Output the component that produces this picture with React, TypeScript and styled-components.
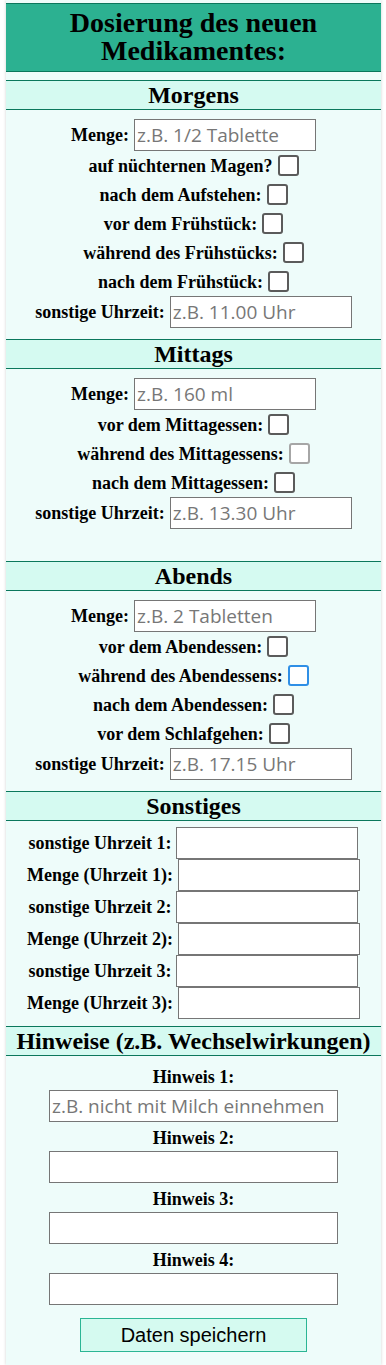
import React from "react";
import styled, { createGlobalStyle, css } from "styled-components";

const GlobalStyle = createGlobalStyle`
  html, body { margin: 0; padding: 0; background: #ffffff; }
  body { font-family: "Liberation Serif", "Times New Roman", serif; color: #000; }
`;

const Page = styled.div`
  padding: 0 5px 0 6px;
`;

const Panel = styled.main`
  width: 375px;
  min-height: 1365px;
  box-sizing: border-box;
  background: #eefcfa;
  padding: 3px 0 12px;
  box-shadow: 0 0 3px rgba(0, 0, 0, 0.18);
`;

const Title = styled.h1`
  margin: 0 0 8px;
  padding: 5px 4px 6px;
  background: #2cb191;
  border-top: 1px solid #0b775c;
  border-bottom: 1px solid #0b775c;
  font-size: 28px;
  line-height: 28px;
  font-weight: bold;
  text-align: center;
`;

const SectionHeader = styled.h2`
  margin: 0;
  background: #d5faf1;
  border-top: 1px solid #0b775c;
  border-bottom: 1px solid #0b775c;
  font-size: 24px;
  line-height: 28px;
  font-weight: bold;
  text-align: center;
`;

const SectionBody = styled.div<{ $top?: number; $bottom?: number }>`
  display: flex;
  flex-direction: column;
  align-items: center;
  padding-top: ${(p) => p.$top ?? 9}px;
  padding-bottom: ${(p) => p.$bottom ?? 11}px;
`;

const Row = styled.div<{ $h: number }>`
  display: flex;
  align-items: center;
  justify-content: center;
  gap: 5px;
  height: ${(p) => p.$h}px;
`;

const Label = styled.label`
  font-size: 18px;
  font-weight: bold;
  line-height: 20px;
  white-space: nowrap;
`;

const TextInput = styled.input<{ $w?: number }>`
  box-sizing: border-box;
  width: ${(p) => p.$w ?? 182}px;
  height: 32px;
  margin: 0;
  padding: 0 2px;
  border: 1px solid #767676;
  background: #ffffff;
  font-family: "Open Sans", "Noto Sans", sans-serif;
  font-size: 19px;
  color: #000;
  outline: none;
  &::placeholder { color: #777777; }
`;

const Check = styled.input<{ $variant?: "normal" | "light" | "focus" }>`
  appearance: none;
  -webkit-appearance: none;
  box-sizing: border-box;
  width: 21px;
  height: 21px;
  margin: 0;
  background: #ffffff;
  border-radius: 3px;
  border: 2px solid #5b5b5b;
  ${(p) =>
    p.$variant === "light" &&
    css`
      border-color: #a6a6a6;
    `}
  ${(p) =>
    p.$variant === "focus" &&
    css`
      border-color: #2f8fe6;
    `}
`;

const NoteBlock = styled.div`
  display: flex;
  flex-direction: column;
  align-items: center;
  margin-bottom: 6px;
`;

const NoteLabel = styled(Label)`
  margin-bottom: 3px;
`;

const SaveButton = styled.button`
  box-sizing: border-box;
  width: 227px;
  height: 34px;
  margin-top: 7px;
  background: #d5faf0;
  border: 1px solid #2bb594;
  font-family: "Liberation Sans", Arial, sans-serif;
  font-size: 20px;
  color: #000;
  padding: 0;
`;

type CheckItem = { label: string; variant?: "normal" | "light" | "focus" };

type Slot = {
  title: string;
  amount: string;
  checks: CheckItem[];
  time: string;
  bottom?: number;
};

const slots: Slot[] = [
  {
    title: "Morgens",
    amount: "z.B. 1/2 Tablette",
    checks: [
      { label: "auf nüchternen Magen?" },
      { label: "nach dem Aufstehen:" },
      { label: "vor dem Frühstück:" },
      { label: "während des Frühstücks:" },
      { label: "nach dem Frühstück:" },
    ],
    time: "z.B. 11.00 Uhr",
  },
  {
    title: "Mittags",
    amount: "z.B. 160 ml",
    checks: [
      { label: "vor dem Mittagessen:" },
      { label: "während des Mittagessens:", variant: "light" },
      { label: "nach dem Mittagessen:" },
    ],
    time: "z.B. 13.30 Uhr",
    bottom: 32,
  },
  {
    title: "Abends",
    amount: "z.B. 2 Tabletten",
    checks: [
      { label: "vor dem Abendessen:" },
      { label: "während des Abendessens:", variant: "focus" },
      { label: "nach dem Abendessen:" },
      { label: "vor dem Schlafgehen:" },
    ],
    time: "z.B. 17.15 Uhr",
  },
];

const extras = [
  "sonstige Uhrzeit 1:",
  "Menge (Uhrzeit 1):",
  "sonstige Uhrzeit 2:",
  "Menge (Uhrzeit 2):",
  "sonstige Uhrzeit 3:",
  "Menge (Uhrzeit 3):",
];

export default function App() {
  return (
    <>
      <GlobalStyle />
      <Page>
        <Panel>
          <Title>
            Dosierung des neuen
            <br />
            Medikamentes:
          </Title>

          {slots.map((s) => (
            <section key={s.title}>
              <SectionHeader>{s.title}</SectionHeader>
              <SectionBody $bottom={s.bottom}>
                <Row $h={32}>
                  <Label>Menge:</Label>
                  <TextInput placeholder={s.amount} />
                </Row>
                {s.checks.map((c) => (
                  <Row $h={29} key={c.label}>
                    <Label>{c.label}</Label>
                    <Check type="checkbox" $variant={c.variant} />
                  </Row>
                ))}
                <Row $h={32}>
                  <Label>sonstige Uhrzeit:</Label>
                  <TextInput placeholder={s.time} />
                </Row>
              </SectionBody>
            </section>
          ))}

          <section>
            <SectionHeader>Sonstiges</SectionHeader>
            <SectionBody $top={6} $bottom={7}>
              {extras.map((e) => (
                <Row $h={32} key={e}>
                  <Label>{e}</Label>
                  <TextInput />
                </Row>
              ))}
            </SectionBody>
          </section>

          <section>
            <SectionHeader>Hinweise (z.B. Wechselwirkungen)</SectionHeader>
            <SectionBody $top={11} $bottom={0}>
              {[1, 2, 3, 4].map((n) => (
                <NoteBlock key={n}>
                  <NoteLabel>Hinweis {n}:</NoteLabel>
                  <TextInput
                    $w={289}
                    placeholder={n === 1 ? "z.B. nicht mit Milch einnehmen" : ""}
                  />
                </NoteBlock>
              ))}
              <SaveButton type="button">Daten speichern</SaveButton>
            </SectionBody>
          </section>
        </Panel>
      </Page>
    </>
  );
}
